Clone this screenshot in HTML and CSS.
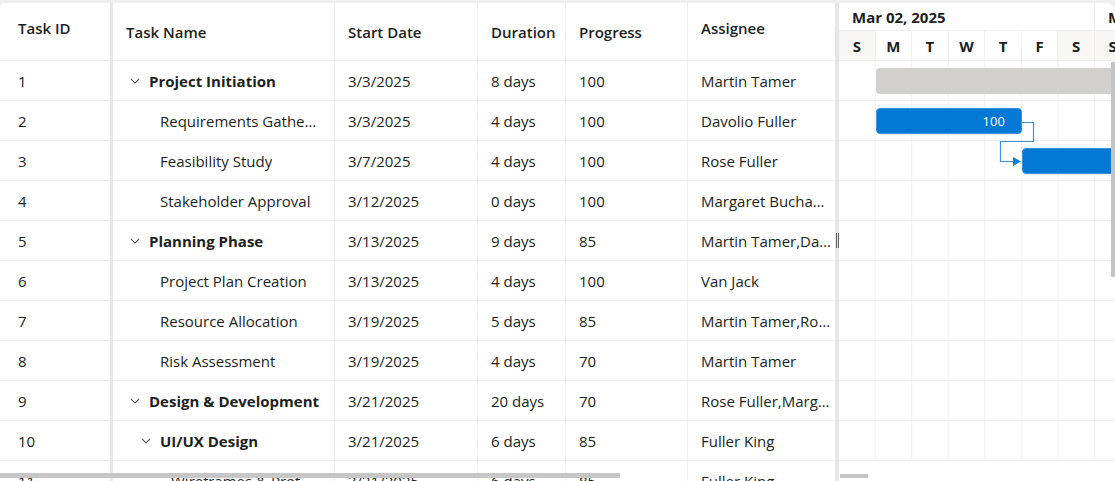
FILE: index.html
```html
<!DOCTYPE html>
<html lang="en">
<head>
<meta charset="utf-8">
<title>Project Schedule</title>
<link rel="stylesheet" href="styles.css">
</head>
<body>
<div class="gantt">
  <div class="grid-pane">
    <div class="row head">
      <div class="cell frozen-left hcell raised">Task ID</div>
      <div class="cell hcell">Task Name</div>
      <div class="cell hcell">Start Date</div>
      <div class="cell hcell">Duration</div>
      <div class="cell hcell">Progress</div>
      <div class="cell hcell raised">Assignee</div>
    </div>

    <div class="row">
      <div class="cell frozen-left">1</div>
      <div class="cell name lvl0 parent"><svg class="chev" viewBox="0 0 10 6"><path d="M1 1 5 5 9 1"/></svg><span class="txt">Project Initiation</span></div>
      <div class="cell">3/3/2025</div>
      <div class="cell">8 days</div>
      <div class="cell">100</div>
      <div class="cell">Martin Tamer</div>
    </div>
    <div class="row">
      <div class="cell frozen-left">2</div>
      <div class="cell name lvl1"><span class="txt">Requirements Gathering</span></div>
      <div class="cell">3/3/2025</div>
      <div class="cell">4 days</div>
      <div class="cell">100</div>
      <div class="cell">Davolio Fuller</div>
    </div>
    <div class="row">
      <div class="cell frozen-left">3</div>
      <div class="cell name lvl1"><span class="txt">Feasibility Study</span></div>
      <div class="cell">3/7/2025</div>
      <div class="cell">4 days</div>
      <div class="cell">100</div>
      <div class="cell">Rose Fuller</div>
    </div>
    <div class="row">
      <div class="cell frozen-left">4</div>
      <div class="cell name lvl1"><span class="txt">Stakeholder Approval</span></div>
      <div class="cell">3/12/2025</div>
      <div class="cell">0 days</div>
      <div class="cell">100</div>
      <div class="cell">Margaret Buchanan</div>
    </div>
    <div class="row">
      <div class="cell frozen-left">5</div>
      <div class="cell name lvl0 parent"><svg class="chev" viewBox="0 0 10 6"><path d="M1 1 5 5 9 1"/></svg><span class="txt">Planning Phase</span></div>
      <div class="cell">3/13/2025</div>
      <div class="cell">9 days</div>
      <div class="cell">85</div>
      <div class="cell">Martin Tamer,Davolio Fuller</div>
    </div>
    <div class="row">
      <div class="cell frozen-left">6</div>
      <div class="cell name lvl1"><span class="txt">Project Plan Creation</span></div>
      <div class="cell">3/13/2025</div>
      <div class="cell">4 days</div>
      <div class="cell">100</div>
      <div class="cell">Van Jack</div>
    </div>
    <div class="row">
      <div class="cell frozen-left">7</div>
      <div class="cell name lvl1"><span class="txt">Resource Allocation</span></div>
      <div class="cell">3/19/2025</div>
      <div class="cell">5 days</div>
      <div class="cell">85</div>
      <div class="cell">Martin Tamer,Rose Fuller</div>
    </div>
    <div class="row">
      <div class="cell frozen-left">8</div>
      <div class="cell name lvl1"><span class="txt">Risk Assessment</span></div>
      <div class="cell">3/19/2025</div>
      <div class="cell">4 days</div>
      <div class="cell">70</div>
      <div class="cell">Martin Tamer</div>
    </div>
    <div class="row">
      <div class="cell frozen-left">9</div>
      <div class="cell name lvl0 parent"><svg class="chev" viewBox="0 0 10 6"><path d="M1 1 5 5 9 1"/></svg><span class="txt">Design &amp; Development</span></div>
      <div class="cell">3/21/2025</div>
      <div class="cell">20 days</div>
      <div class="cell">70</div>
      <div class="cell">Rose Fuller,Margaret Buchanan</div>
    </div>
    <div class="row">
      <div class="cell frozen-left">10</div>
      <div class="cell name lvl1 parent"><svg class="chev" viewBox="0 0 10 6"><path d="M1 1 5 5 9 1"/></svg><span class="txt">UI/UX Design</span></div>
      <div class="cell">3/21/2025</div>
      <div class="cell">6 days</div>
      <div class="cell">85</div>
      <div class="cell">Fuller King</div>
    </div>
    <div class="row">
      <div class="cell frozen-left">11</div>
      <div class="cell name lvl2"><span class="txt">Wireframes &amp; Prototypes</span></div>
      <div class="cell">3/21/2025</div>
      <div class="cell">6 days</div>
      <div class="cell">85</div>
      <div class="cell">Fuller King</div>
    </div>

    <div class="hscroll grid-scroll"></div>
  </div>

  <div class="splitter"><span class="grip"></span></div>

  <div class="chart-pane">
    <div class="timeline">
      <div class="tier-top">
        <div class="week">Mar 02, 2025</div>
        <div class="week">Mar 09, 2025</div>
      </div>
      <div class="tier-bottom">
        <div class="day weekend">S</div>
        <div class="day">M</div>
        <div class="day">T</div>
        <div class="day">W</div>
        <div class="day">T</div>
        <div class="day">F</div>
        <div class="day weekend">S</div>
        <div class="day weekend">S</div>
        <div class="day">M</div>
      </div>
    </div>
    <div class="chart-body">
      <div class="lane"><div class="bar summary" style="left:36.57px;width:292.57px"></div></div>
      <div class="lane"><div class="bar task" style="left:36.57px;width:146.29px"><span class="bar-label">100</span></div></div>
      <div class="lane"><div class="bar task" style="left:182.86px;width:146.29px"></div></div>
      <div class="lane"></div>
      <div class="lane"></div>
      <div class="lane"></div>
      <div class="lane"></div>
      <div class="lane"></div>
      <div class="lane"></div>
      <div class="lane"></div>
      <svg class="links" width="280" height="120" viewBox="0 0 280 120">
        <path d="M183 61.5H194.5V80.5H161.5V100.5H175" />
        <polygon points="174,96 182,100.5 174,105" />
      </svg>
    </div>
    <div class="vscroll"></div>
    <div class="hscroll chart-scroll"></div>
  </div>
</div>
</body>
</html>
```

FILE: styles.css
```css
* { box-sizing: border-box; }

html, body {
  margin: 0;
  height: 100%;
}

body {
  background: #efefef;
  font-family: "Open Sans", "Noto Sans", sans-serif;
  font-size: 15px;
  color: #201f1e;
  overflow: hidden;
}

.gantt {
  margin-top: 3px;
  height: 478px;
  background: #fff;
  border-radius: 5px 9px 0 0;
  display: flex;
  overflow: hidden;
  position: relative;
}

/* ---------- tree grid ---------- */
.grid-pane {
  width: 835px;
  flex: none;
  position: relative;
  overflow: hidden;
}

.row {
  display: grid;
  grid-template-columns: 113px 222px 143px 88px 122px 147px;
  height: 40px;
}

.row.head { height: 58px; }

.cell {
  padding: 1px 13px 0;
  line-height: 39px;
  white-space: nowrap;
  overflow: hidden;
  text-overflow: ellipsis;
  border-right: 1px solid #f0f0f0;
  border-bottom: 1px solid #f0f0f0;
}

/* assignee column sits against the splitter */
.cell:last-child {
  border-right: none;
  padding-right: 3px;
}

.frozen-left {
  padding-left: 18px;
  border-right: 3px solid #e8e8e8;
}

.hcell {
  font-weight: 600;
  padding-top: 1px;
  padding-right: 2px;
  line-height: 57px;
  text-overflow: clip;
}

.hcell.raised { line-height: 49px; }

.name {
  display: flex;
  align-items: center;
}

.name .txt {
  min-width: 0;
  overflow: hidden;
  text-overflow: ellipsis;
}

.parent .txt { font-weight: 700; }

.lvl1 { padding-left: 24px; }
.lvl2 { padding-left: 35px; }

.name:not(.parent) .txt { margin-left: 23px; }

.chev {
  width: 10px;
  height: 6px;
  margin: 0 9px 0 4px;
  flex: none;
  fill: none;
  stroke: #605e5c;
  stroke-width: 1.1;
}

/* ---------- splitter ---------- */
.splitter {
  width: 4px;
  flex: none;
  background: #e6e6e6;
  position: relative;
}

.grip {
  position: absolute;
  left: 1px;
  top: 230px;
  width: 3px;
  height: 15px;
  border-left: 1px solid #5f5f5f;
  border-right: 1px solid #5f5f5f;
}

/* ---------- chart ---------- */
.chart-pane {
  flex: 1;
  position: relative;
  overflow: hidden;
}

.timeline {
  height: 58px;
  width: 400px;
  border-bottom: 1px solid #f0f0f0;
}

.tier-top {
  display: flex;
  height: 28px;
  border-bottom: 1px solid #f0f0f0;
}

.week {
  width: 256px;
  flex: none;
  padding-left: 13px;
  line-height: 28px;
  font-weight: 700;
  border-right: 1px solid #f0f0f0;
}

.tier-bottom {
  display: flex;
  height: 29px;
}

.day {
  width: 36.571px;
  flex: none;
  text-align: center;
  line-height: 30px;
  font-weight: 700;
  border-right: 1px solid #f0f0f0;
}

.day.weekend { background: #f8f7f6; }

.chart-body {
  position: relative;
  width: 400px;
  background-image: linear-gradient(to left, #f0f0f0 1px, transparent 1px);
  background-size: 36.571px 100%;
}

.lane {
  position: relative;
  height: 40px;
  border-bottom: 1px solid #f0f0f0;
}

.bar {
  position: absolute;
  top: 7px;
  height: 26px;
  border-radius: 4px;
}

.bar.summary { background: #d2d0ce; }

.bar.task {
  background: #0078d4;
  border: 1px solid #3a8fdc;
  display: flex;
  align-items: center;
  justify-content: flex-end;
  padding-right: 16px;
}

.bar-label {
  color: #fff;
  font-size: 13px;
}

.links {
  position: absolute;
  left: 0;
  top: 0;
  overflow: visible;
}

.links path {
  fill: none;
  stroke: #3c93e2;
  stroke-width: 1.2;
}

.links polygon { fill: #0f7fd8; }

/* ---------- scrollbars ---------- */
.vscroll {
  position: absolute;
  right: 0;
  top: 59px;
  width: 4px;
  height: 215px;
  background: #c4c4c4;
}

.hscroll {
  position: absolute;
  height: 5px;
  background: #c6c6c6;
}

.grid-scroll {
  left: 0;
  top: 470px;
  width: 620px;
}

.chart-scroll {
  left: 1px;
  top: 471px;
  width: 28px;
  height: 4px;
}
```
